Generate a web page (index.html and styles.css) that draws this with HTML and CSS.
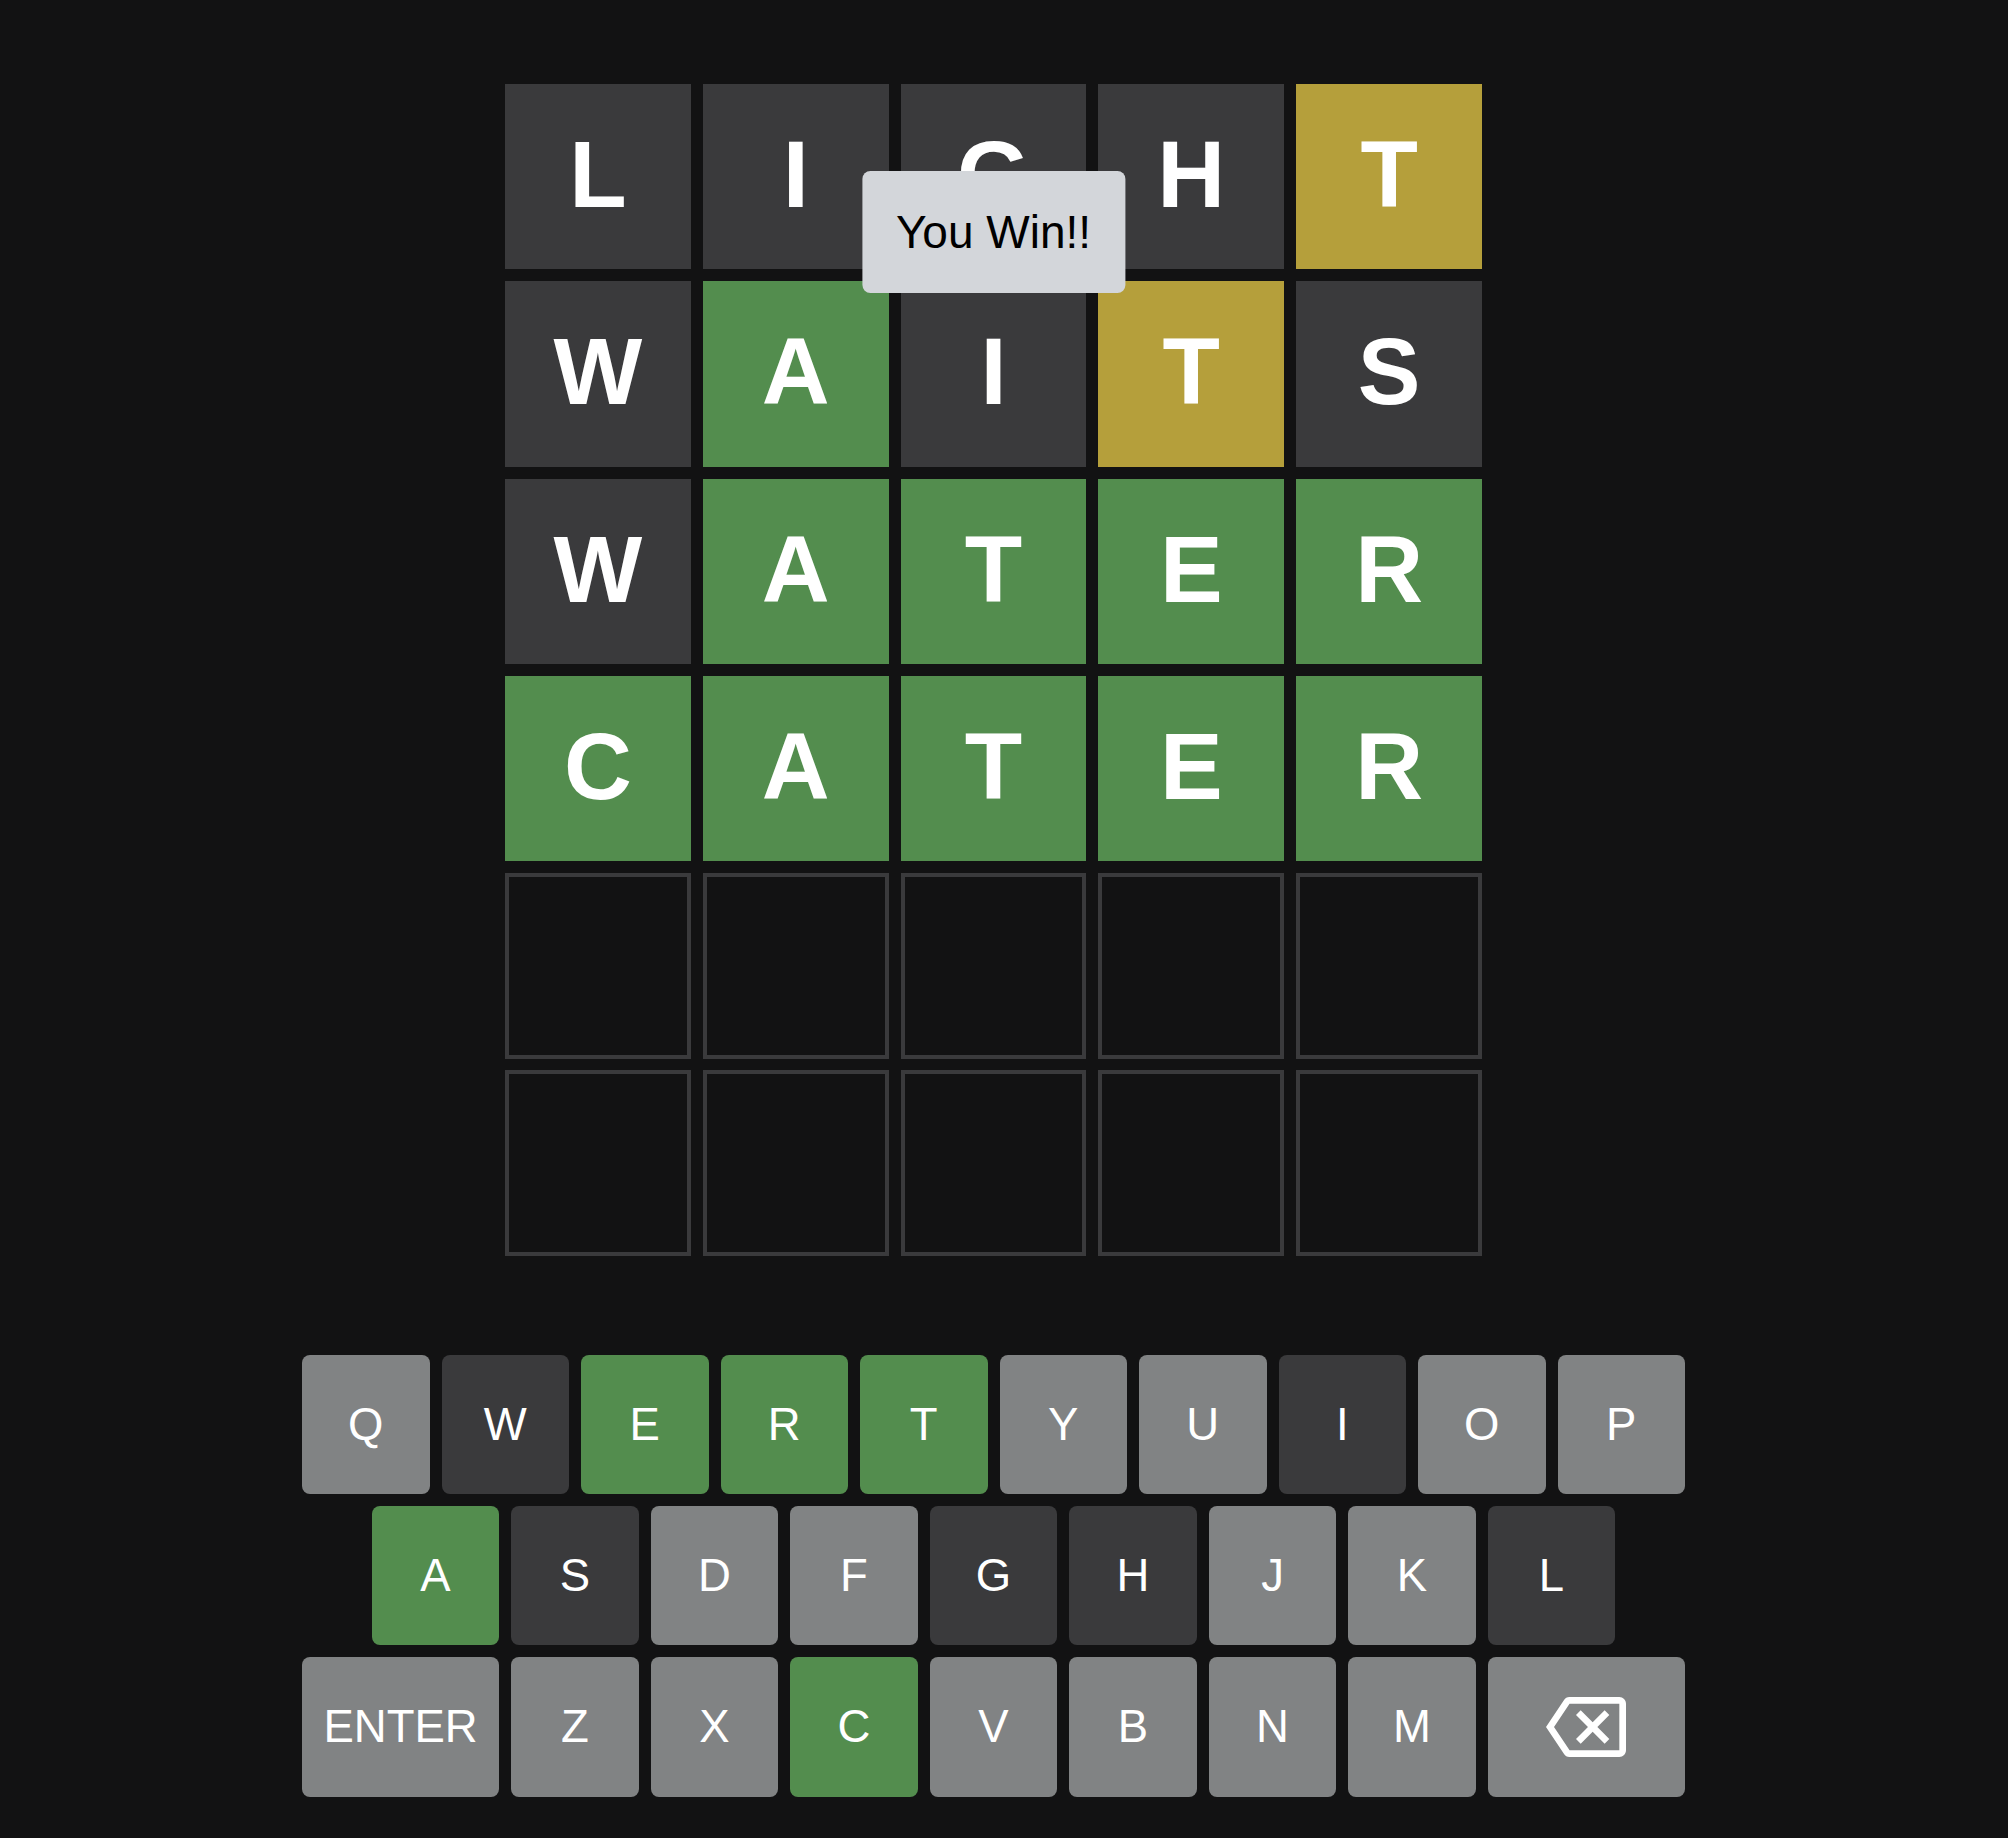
FILE: index.html
```html
<!DOCTYPE html>
<html lang="en">
<head>
<meta charset="utf-8">
<title>Wordle</title>
<link rel="stylesheet" href="styles.css">
</head>
<body>
<div class="app">
  <div class="board-wrap">
    <div class="board">
      <div class="row">
        <div class="tile absent">L</div>
        <div class="tile absent">I</div>
        <div class="tile absent">G</div>
        <div class="tile absent">H</div>
        <div class="tile present">T</div>
      </div>
      <div class="row">
        <div class="tile absent">W</div>
        <div class="tile correct">A</div>
        <div class="tile absent">I</div>
        <div class="tile present">T</div>
        <div class="tile absent">S</div>
      </div>
      <div class="row">
        <div class="tile absent">W</div>
        <div class="tile correct">A</div>
        <div class="tile correct">T</div>
        <div class="tile correct">E</div>
        <div class="tile correct">R</div>
      </div>
      <div class="row">
        <div class="tile correct">C</div>
        <div class="tile correct">A</div>
        <div class="tile correct">T</div>
        <div class="tile correct">E</div>
        <div class="tile correct">R</div>
      </div>
      <div class="row">
        <div class="tile empty"></div>
        <div class="tile empty"></div>
        <div class="tile empty"></div>
        <div class="tile empty"></div>
        <div class="tile empty"></div>
      </div>
      <div class="row">
        <div class="tile empty"></div>
        <div class="tile empty"></div>
        <div class="tile empty"></div>
        <div class="tile empty"></div>
        <div class="tile empty"></div>
      </div>
    </div>
    <div class="toast">You Win!!</div>
  </div>

  <div class="keyboard">
    <div class="kb-row">
      <div class="key">Q</div>
      <div class="key k-absent">W</div>
      <div class="key k-correct">E</div>
      <div class="key k-correct">R</div>
      <div class="key k-correct">T</div>
      <div class="key">Y</div>
      <div class="key">U</div>
      <div class="key k-absent">I</div>
      <div class="key">O</div>
      <div class="key">P</div>
    </div>
    <div class="kb-row">
      <div class="key k-correct">A</div>
      <div class="key k-absent">S</div>
      <div class="key">D</div>
      <div class="key">F</div>
      <div class="key k-absent">G</div>
      <div class="key k-absent">H</div>
      <div class="key">J</div>
      <div class="key">K</div>
      <div class="key k-absent">L</div>
    </div>
    <div class="kb-row">
      <div class="key wide">ENTER</div>
      <div class="key">Z</div>
      <div class="key">X</div>
      <div class="key k-correct">C</div>
      <div class="key">V</div>
      <div class="key">B</div>
      <div class="key">N</div>
      <div class="key">M</div>
      <div class="key wide">
        <svg class="bs-icon" viewBox="0 3 24 18" width="80" height="60" aria-hidden="true">
          <path fill="#ffffff" d="M22 3H7c-.69 0-1.23.35-1.59.88L0 12l5.410 8.110c.36.53.9.89 1.59.89h15c1.1 0 2-.9 2-2V5c0-1.1-.9-2-2-2zm0 16H7.07L2.4 12l4.66-7H22v14zm-11.59-2L14 13.41 17.59 17 19 15.59 15.41 12 19 8.41 17.59 7 14 10.59 10.41 7 9 8.41 12.59 12 9 15.59z"/>
        </svg>
      </div>
    </div>
  </div>
</div>
</body>
</html>
```

FILE: styles.css
```css
html, body {
  margin: 0;
  padding: 0;
  background: #121213;
}

body {
  font-family: "Liberation Sans", Arial, sans-serif;
  color: #ffffff;
}

.app {
  width: 1987px;
  display: flex;
  flex-direction: column;
  align-items: center;
  padding-top: 84px;
}

.board-wrap {
  position: relative;
}

.board {
  width: 977px;
  display: grid;
  grid-template-rows: repeat(6, 185.4px);
  row-gap: 11.9px;
}

.row {
  display: grid;
  grid-template-columns: repeat(5, 1fr);
  column-gap: 12px;
}

.tile {
  box-sizing: border-box;
  display: flex;
  align-items: center;
  justify-content: center;
  font-size: 94px;
  font-weight: 700;
  color: #ffffff;
  padding-bottom: 3px;
}

.tile.absent { background: #3a3a3c; }
.tile.present { background: #b59f3b; }
.tile.correct { background: #538d4e; }
.tile.empty {
  border: 4px solid #3a3a3c;
  background: #121213;
}

.toast {
  position: absolute;
  top: 87px;
  left: 50%;
  transform: translateX(-50%);
  background: #d3d6da;
  color: #000000;
  font-size: 46px;
  line-height: 52px;
  padding: 35px 34px;
  border-radius: 8px;
  white-space: nowrap;
}

.keyboard {
  margin-top: 99px;
  display: flex;
  flex-direction: column;
  align-items: center;
  row-gap: 11.7px;
}

.kb-row {
  display: flex;
  justify-content: center;
  column-gap: 12px;
}

.key {
  width: 127.5px;
  height: 139.5px;
  border-radius: 8px;
  background: #818384;
  color: #ffffff;
  font-size: 45.5px;
  display: flex;
  align-items: center;
  justify-content: center;
}

.key.wide { width: 197.25px; }
.key.k-absent { background: #3a3a3c; }
.key.k-correct { background: #538d4e; }

.bs-icon { display: block; }
```
